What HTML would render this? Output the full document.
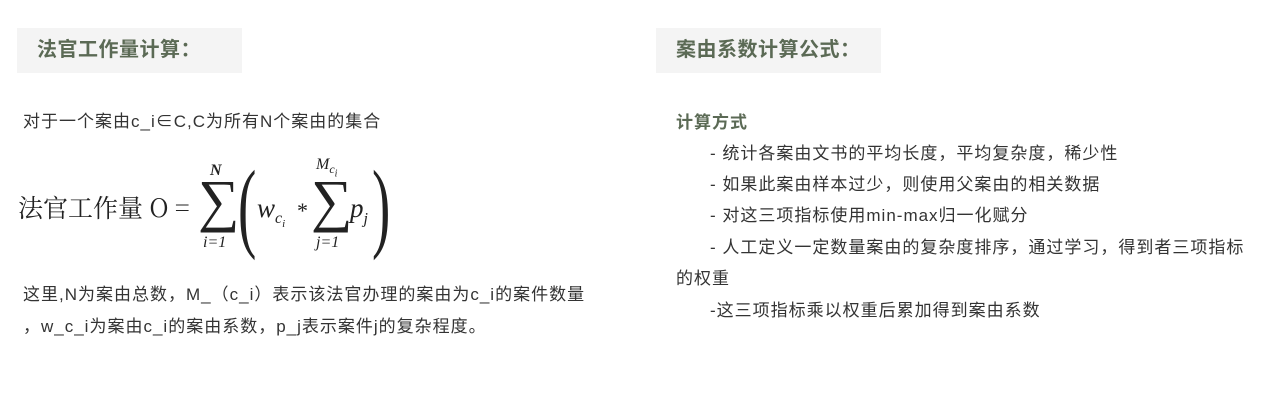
<!DOCTYPE html>
<html><head><meta charset="utf-8"><style>
body{margin:0;width:1287px;height:402px;background:#fff;position:relative;overflow:hidden;font-family:"Liberation Sans","Noto Sans CJK SC",sans-serif;color:#333;}
.a{position:absolute;white-space:nowrap;}
.hb{position:absolute;top:28px;width:225px;height:45px;background:#f4f4f4;box-sizing:border-box;}
.h{font-size:20px;font-weight:bold;color:#5b6a55;line-height:45px;padding-left:20px;letter-spacing:0.5px}
.t{font-size:17px;line-height:20px;letter-spacing:1px}
.m{font-family:"Liberation Serif","Noto Serif CJK SC",serif;font-style:italic;position:absolute;white-space:nowrap;color:#222;}
</style></head><body>
<div class="hb h" style="left:17px">法官工作量计算：</div>
<div class="hb h" style="left:656px">案由系数计算公式：</div>

<div class="a t" style="left:23px;top:112px">对于一个案由c_i∈C,C为所有N个案由的集合</div>

<div class="a" style="left:18px;top:192px;font-size:25px;font-family:'Noto Serif CJK SC',serif;color:#222;line-height:30px">法官工作量 O =</div>
<div class="m" style="left:198px;top:166px;font-size:58px;font-style:normal;line-height:70px">∑</div>
<div class="m" style="left:210px;top:162px;font-size:16px;font-weight:bold">N</div>
<div class="m" style="left:203px;top:234px;font-size:16px">i=1</div>
<div class="m" style="left:238px;top:146px;font-size:100px;font-style:normal;line-height:120px;transform:scaleX(0.55);transform-origin:left">(</div>
<div class="m" style="left:257px;top:193px;font-size:27px">w<sub style="font-size:16px">c<sub style="font-size:11px">i</sub></sub></div>
<div class="m" style="left:297px;top:198px;font-size:22px;font-style:normal">*</div>
<div class="m" style="left:311px;top:166px;font-size:58px;font-style:normal;line-height:70px">∑</div>
<div class="m" style="left:316px;top:156px;font-size:16px">M<sub style="font-size:12px">c<sub>i</sub></sub></div>
<div class="m" style="left:316px;top:234px;font-size:16px">j=1</div>
<div class="m" style="left:350px;top:193px;font-size:27px">p<sub style="font-size:16px">j</sub></div>
<div class="m" style="left:372px;top:146px;font-size:100px;font-style:normal;line-height:120px;transform:scaleX(0.55);transform-origin:left">)</div>

<div class="a t" style="left:23px;top:285px">这里,N为案由总数，M_（c_i）表示该法官办理的案由为c_i的案件数量</div>
<div class="a t" style="left:23px;top:317px">，w_c_i为案由c_i的案由系数，p_j表示案件j的复杂程度。</div>

<div class="a t" style="left:676px;top:113px;font-weight:bold;color:#5b6a55">计算方式</div>
<div class="a t" style="left:710px;top:144px">- 统计各案由文书的平均长度，平均复杂度，稀少性</div>
<div class="a t" style="left:710px;top:175px">- 如果此案由样本过少，则使用父案由的相关数据</div>
<div class="a t" style="left:710px;top:206px">- 对这三项指标使用min-max归一化赋分</div>
<div class="a t" style="left:710px;top:238px">- 人工定义一定数量案由的复杂度排序，通过学习，得到者三项指标</div>
<div class="a t" style="left:676px;top:269px">的权重</div>
<div class="a t" style="left:710px;top:301px">-这三项指标乘以权重后累加得到案由系数</div>
</body></html>
